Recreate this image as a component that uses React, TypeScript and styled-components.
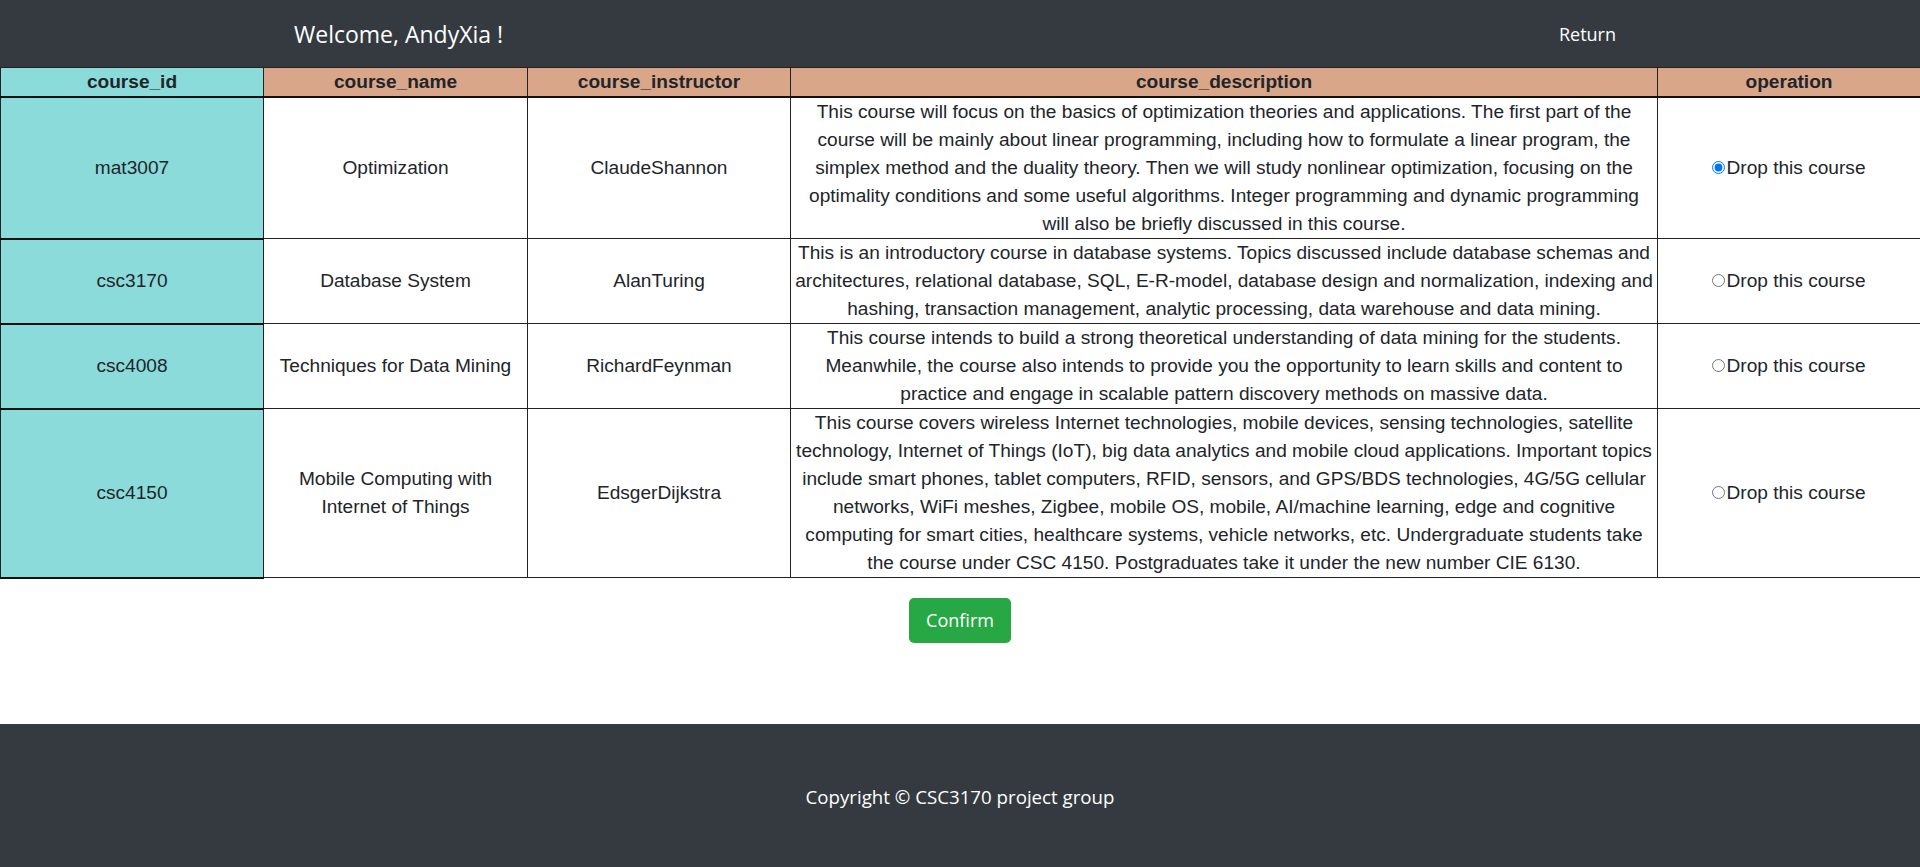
import React, { useState } from 'react';
import styled, { createGlobalStyle } from 'styled-components';

const GlobalStyle = createGlobalStyle`
  body {
    margin: 0;
    background: #fff;
    font-family: "Open Sans", "Noto Sans", sans-serif;
    color: #212529;
  }
`;

const TopBar = styled.header`
  height: 67px;
  background-color: #343a40;
  display: flex;
  align-items: center;
  justify-content: space-between;
  padding: 0 304px 0 294px;
  color: #fff;
`;

const Welcome = styled.span`
  font-size: 23px;
`;

const ReturnLink = styled.a`
  font-size: 18px;
  color: #fff;
  text-decoration: none;
  cursor: pointer;
`;

const CourseTable = styled.table`
  width: 1920px;
  table-layout: fixed;
  border-collapse: collapse;
  font-family: "Liberation Sans", Arial, sans-serif;
  font-size: 19.1px;
  line-height: 28px;
  color: #212529;
`;

const HeadCell = styled.th<{ $first?: boolean }>`
  background-color: ${(p) => (p.$first ? '#8cdbdb' : '#d9a68a')};
  border: 1px solid #222;
  border-bottom: 2px solid #111;
  font-weight: bold;
  padding: 0;
  height: 27px;
`;

const IdCell = styled.td`
  background-color: #8cdbdb;
  border: 1px solid #222;
  border-bottom: 2px solid #111;
  text-align: center;
  vertical-align: middle;
  padding: 0;
`;

const Cell = styled.td<{ $wide?: boolean }>`
  border: 1px solid #222;
  text-align: center;
  vertical-align: middle;
  padding: ${(p) => (p.$wide ? '0 3px' : '0')};
`;

const RadioLabel = styled.label`
  display: inline-flex;
  align-items: center;
  cursor: pointer;
`;

const Radio = styled.input`
  width: 13px;
  height: 13px;
  margin: 0 1px 0 0;
  accent-color: #0075ff;
`;

const Actions = styled.div`
  display: flex;
  justify-content: center;
  padding: 19px 0 81px;
`;

const ConfirmButton = styled.button`
  background-color: #28a745;
  color: #fff;
  border: none;
  border-radius: 5px;
  font-family: "Open Sans", "Noto Sans", sans-serif;
  font-size: 18px;
  line-height: 27px;
  padding: 9px 17px;
  cursor: pointer;
`;

const Footer = styled.footer`
  height: 146px;
  background-color: #343a40;
  color: #fff;
  display: flex;
  align-items: center;
  justify-content: center;
  font-size: 18.7px;
`;

interface Course {
  id: string;
  name: string;
  instructor: string;
  description: string;
}

const courses: Course[] = [
  {
    id: 'mat3007',
    name: 'Optimization',
    instructor: 'ClaudeShannon',
    description:
      'This course will focus on the basics of optimization theories and applications. The first part of the course will be mainly about linear programming, including how to formulate a linear program, the simplex method and the duality theory. Then we will study nonlinear optimization, focusing on the optimality conditions and some useful algorithms. Integer programming and dynamic programming will also be briefly discussed in this course.',
  },
  {
    id: 'csc3170',
    name: 'Database System',
    instructor: 'AlanTuring',
    description:
      'This is an introductory course in database systems. Topics discussed include database schemas and architectures, relational database, SQL, E-R-model, database design and normalization, indexing and hashing, transaction management, analytic processing, data warehouse and data mining.',
  },
  {
    id: 'csc4008',
    name: 'Techniques for Data Mining',
    instructor: 'RichardFeynman',
    description:
      'This course intends to build a strong theoretical understanding of data mining for the students. Meanwhile, the course also intends to provide you the opportunity to learn skills and content to practice and engage in scalable pattern discovery methods on massive data.',
  },
  {
    id: 'csc4150',
    name: 'Mobile Computing with Internet of Things',
    instructor: 'EdsgerDijkstra',
    description:
      'This course covers wireless Internet technologies, mobile devices, sensing technologies, satellite technology, Internet of Things (IoT), big data analytics and mobile cloud applications. Important topics include smart phones, tablet computers, RFID, sensors, and GPS/BDS technologies, 4G/5G cellular networks, WiFi meshes, Zigbee, mobile OS, mobile, AI/machine learning, edge and cognitive computing for smart cities, healthcare systems, vehicle networks, etc. Undergraduate students take the course under CSC 4150. Postgraduates take it under the new number CIE 6130.',
  },
];

const columns = ['course_id', 'course_name', 'course_instructor', 'course_description', 'operation'];
const widths = [263, 264, 263, 867, 263];

function App() {
  const [selected, setSelected] = useState('mat3007');

  return (
    <>
      <GlobalStyle />
      <TopBar>
        <Welcome>Welcome, AndyXia !</Welcome>
        <ReturnLink>Return</ReturnLink>
      </TopBar>
      <CourseTable>
        <colgroup>
          {widths.map((w, i) => (
            <col key={i} style={{ width: w }} />
          ))}
        </colgroup>
        <thead>
          <tr>
            {columns.map((c, i) => (
              <HeadCell key={c} $first={i === 0}>{c}</HeadCell>
            ))}
          </tr>
        </thead>
        <tbody>
          {courses.map((course) => (
            <tr key={course.id}>
              <IdCell>{course.id}</IdCell>
              <Cell>{course.name}</Cell>
              <Cell>{course.instructor}</Cell>
              <Cell $wide>{course.description}</Cell>
              <Cell>
                <RadioLabel>
                  <Radio
                    type="radio"
                    name="drop"
                    checked={selected === course.id}
                    onChange={() => setSelected(course.id)}
                  />
                  Drop this course
                </RadioLabel>
              </Cell>
            </tr>
          ))}
        </tbody>
      </CourseTable>
      <Actions>
        <ConfirmButton>Confirm</ConfirmButton>
      </Actions>
      <Footer>Copyright © CSC3170 project group</Footer>
    </>
  );
}

export default App;
